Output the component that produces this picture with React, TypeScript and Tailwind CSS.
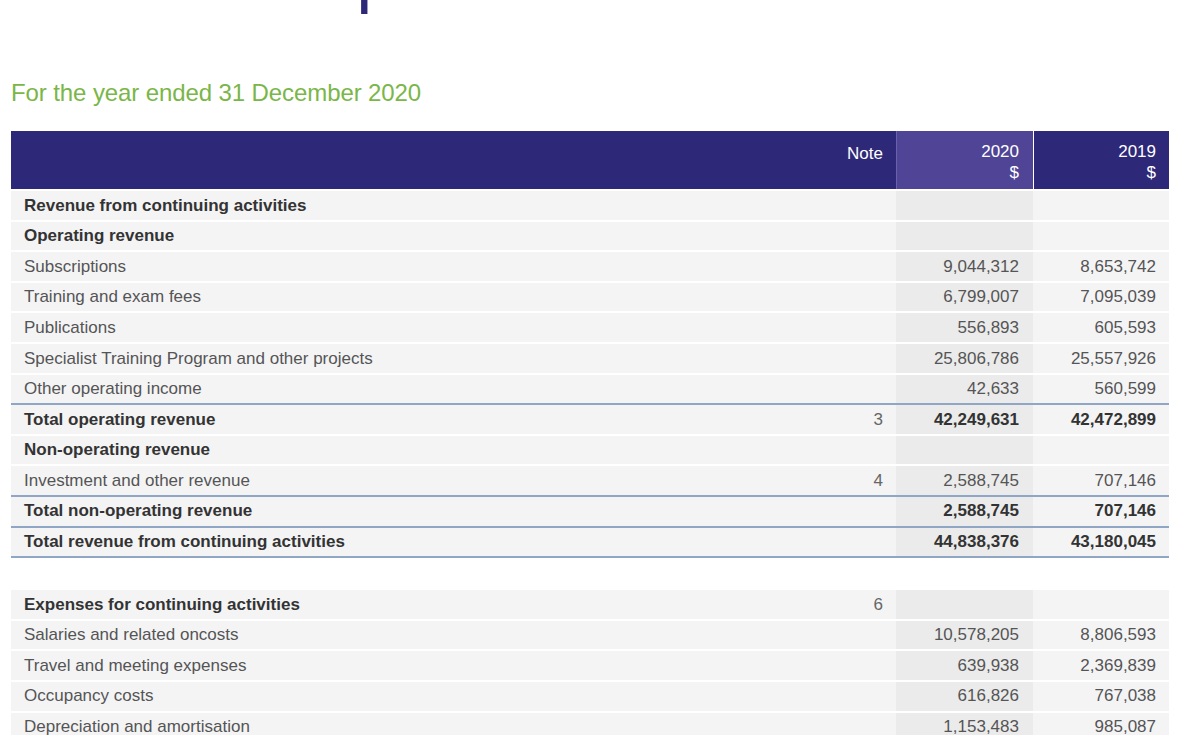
import React from "react";

type Row = { label: string; note?: string; a?: string; b?: string; bold?: boolean; line?: boolean };

const sec1: Row[] = [
  { label: "Revenue from continuing activities", bold: true },
  { label: "Operating revenue", bold: true },
  { label: "Subscriptions", a: "9,044,312", b: "8,653,742" },
  { label: "Training and exam fees", a: "6,799,007", b: "7,095,039" },
  { label: "Publications", a: "556,893", b: "605,593" },
  { label: "Specialist Training Program and other projects", a: "25,806,786", b: "25,557,926" },
  { label: "Other operating income", a: "42,633", b: "560,599", line: true },
  { label: "Total operating revenue", note: "3", a: "42,249,631", b: "42,472,899", bold: true },
  { label: "Non-operating revenue", bold: true },
  { label: "Investment and other revenue", note: "4", a: "2,588,745", b: "707,146", line: true },
  { label: "Total non-operating revenue", a: "2,588,745", b: "707,146", bold: true, line: true },
  { label: "Total revenue from continuing activities", a: "44,838,376", b: "43,180,045", bold: true, line: true },
];
const sec2: Row[] = [
  { label: "Expenses for continuing activities", note: "6", bold: true },
  { label: "Salaries and related oncosts", a: "10,578,205", b: "8,806,593" },
  { label: "Travel and meeting expenses", a: "639,938", b: "2,369,839" },
  { label: "Occupancy costs", a: "616,826", b: "767,038" },
  { label: "Depreciation and amortisation", a: "1,153,483", b: "985,087" },
];

function R({ r }: { r: Row }) {
  const bc = r.line ? "border-[#8fa6c4]" : "border-white";
  const w = r.bold ? "font-bold text-[#333]" : "text-[#555]";
  return (
    <div className={`flex h-[30.6px] border-b-2 ${bc} ${w}`}>
      <div className="flex-1 bg-[#f4f4f5] flex items-center justify-between pl-[13px] pr-[13px]">
        <span>{r.label}</span>
        <span className="text-[#666] font-normal">{r.note}</span>
      </div>
      <div className="w-[137px] bg-[#ebebeb] flex items-center justify-end pr-[14px]">{r.a}</div>
      <div className="w-[136px] bg-[#f4f4f5] flex items-center justify-end pr-[13px]">{r.b}</div>
    </div>
  );
}

export default function App() {
  return (
    <div className="w-[1200px] h-[735px] overflow-hidden bg-white" style={{ fontFamily: '"Liberation Sans", Arial, sans-serif' }}>
      <div className="h-[14px] overflow-hidden relative">
        <div className="absolute left-[18px] top-[-62px] text-[72px] leading-[72px] font-light text-[#2e2878] whitespace-nowrap tracking-[2px]">
          other comprehensive income
        </div>
      </div>
      <div className="pl-[11px] pt-[61px] text-[24px] text-[#7ab648] font-light tracking-[-0.1px]">
        For the year ended 31 December 2020
      </div>
      <div className="mx-[11px] mt-[20px] w-[1158px] text-[17px]">
        <div className="flex h-[60px] bg-[#2e2878] text-white text-[17px] border-b-2 border-white">
          <div className="flex-1 text-right pr-[13px] pt-[10px]">Note</div>
          <div className="w-[137px] bg-[#4f4495] text-right pr-[14px] pt-[10px] leading-[21px] border-l border-[#6a62a8]">2020<br />$</div>
          <div className="w-[136px] text-right pr-[13px] pt-[10px] leading-[21px] border-l border-white">2019<br />$</div>
        </div>
        {sec1.map((r, i) => <R key={i} r={r} />)}
        <div className="h-[32px]" />
        {sec2.map((r, i) => <R key={i} r={r} />)}
      </div>
    </div>
  );
}
